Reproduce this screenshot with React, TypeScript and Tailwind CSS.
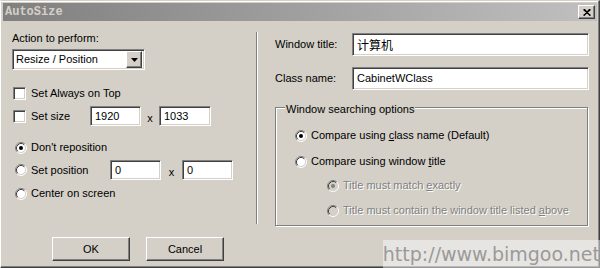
import React from "react";

const sunken =
  "bg-white border border-t-[#808080] border-l-[#808080] border-b-white border-r-white shadow-[inset_1px_1px_0_#404040,inset_-1px_-1px_0_#d4d0c8]";
const raised =
  "bg-[#d4d0c8] border border-t-white border-l-white border-b-[#404040] border-r-[#404040] shadow-[inset_-1px_-1px_0_#808080]";

function Radio({ checked, disabled }: { checked?: boolean; disabled?: boolean }) {
  return (
    <svg width="12" height="12" viewBox="0 0 12 12" className="shrink-0">
      <circle cx="6" cy="6" r="5" fill={disabled ? "#d4d0c8" : "#ffffff"} />
      <path d="M2.11 9.89 A5.5 5.5 0 0 1 9.89 2.11" fill="none" stroke="#808080" strokeWidth="1" />
      <path d="M2.82 9.18 A4.5 4.5 0 0 1 9.18 2.82" fill="none" stroke="#404040" strokeWidth="1" />
      <path d="M9.89 2.11 A5.5 5.5 0 0 1 2.11 9.89" fill="none" stroke="#ffffff" strokeWidth="1" />
      <path d="M9.18 2.82 A4.5 4.5 0 0 1 2.82 9.18" fill="none" stroke="#d4d0c8" strokeWidth="1" />
      {checked && <circle cx="6" cy="6" r="2" fill={disabled ? "#808080" : "#000000"} />}
    </svg>
  );
}

function Check() {
  return <div className={`w-[13px] h-[13px] shrink-0 ${sunken}`} />;
}

const disabledText = "text-[#808080] [text-shadow:1px_1px_0_#ffffff]";

export default function App() {
  return (
    <div className="relative w-[600px] h-[268px] overflow-hidden bg-[#d4d0c8] font-['Liberation_Sans',Arial,sans-serif] text-[11px] leading-[13px] text-black">
      <div className="flex flex-col h-full border border-t-[#d4d0c8] border-l-white border-b-[#404040] border-r-[#404040] shadow-[inset_-1px_-1px_0_#808080,inset_0_1px_0_#ffffff] pt-[2px] pl-[2px] pr-[2px]">
        {/* Title bar */}
        <div className="h-[18px] shrink-0 flex items-center justify-between bg-linear-to-r from-[#808080] to-[#c0c0c0] pl-[2px] pr-[2px]">
          <span className="font-['Liberation_Mono',monospace] font-bold text-[12px] text-[#d4d0c8] tracking-[0px]">AutoSize</span>
          <div className={`w-[17px] h-[14px] flex items-center justify-center ${raised}`}>
            <svg width="8" height="7" viewBox="0 0 8 7">
              <path d="M0.5 0.5 L7.5 6.5 M7.5 0.5 L0.5 6.5 M1.5 0.5 L7 6.5 M6.5 0.5 L1 6.5" stroke="#000" strokeWidth="1.3" fill="none" />
            </svg>
          </div>
        </div>

        {/* Body */}
        <div className="flex flex-1">
          {/* Left column */}
          <div className="w-[253px] shrink-0 pl-[9px] flex flex-col">
            <div className="mt-[11px] h-[13px]">Action to perform:</div>
            <div className={`mt-[4px] w-[133px] h-[21px] flex items-center ${sunken} pl-[3px] pr-[2px]`}>
              <span className="flex-1">Resize / Position</span>
              <div className={`w-[16px] h-[17px] flex items-center justify-center ${raised}`}>
                <svg width="7" height="4" viewBox="0 0 7 4">
                  <path d="M0 0 H7 L3.5 4 Z" fill="#000" />
                </svg>
              </div>
            </div>

            <div className="mt-[17px] h-[13px] flex items-center gap-[5px] pl-[1px]">
              <Check />
              <span>Set Always on Top</span>
            </div>

            <div className="mt-[6px] h-[20px] flex items-center">
              <div className="w-[78px] flex items-center gap-[5px] pl-[1px]">
                <Check />
                <span>Set size</span>
              </div>
              <div className={`w-[51px] h-[20px] flex items-center pl-[4px] ${sunken}`}>1920</div>
              <span className="w-[18px] text-center mt-[5px]">x</span>
              <div className={`w-[52px] h-[20px] flex items-center pl-[4px] ${sunken}`}>1033</div>
            </div>

            <div className="mt-[15px] h-[13px] flex items-center gap-[4px] pl-[3px]">
              <Radio checked />
              <span>Don't reposition</span>
            </div>

            <div className="mt-[6px] h-[20px] flex items-center">
              <div className="w-[98px] flex items-center gap-[4px] pl-[3px]">
                <Radio />
                <span>Set position</span>
              </div>
              <div className={`w-[51px] h-[20px] flex items-center pl-[4px] ${sunken}`}>0</div>
              <span className="w-[21px] text-center mt-[5px]">x</span>
              <div className={`w-[51px] h-[20px] flex items-center pl-[4px] ${sunken}`}>0</div>
            </div>

            <div className="mt-[7px] h-[13px] flex items-center gap-[4px] pl-[3px]">
              <Radio />
              <span>Center on screen</span>
            </div>

            <div className="mt-[37px] ml-[40px] flex gap-[16px]">
              <div className={`w-[78px] h-[24px] flex items-center justify-center ${raised}`}>OK</div>
              <div className={`w-[78px] h-[24px] flex items-center justify-center ${raised}`}>Cancel</div>
            </div>
          </div>

          {/* Separator */}
          <div className="mt-[11px] h-[192px] w-[2px] shrink-0 border-l border-l-[#808080] border-r border-r-white" />

          {/* Right column */}
          <div className="flex-1 pl-[17px] pr-[8px] flex flex-col">
            <div className="mt-[12px] h-[23px] flex items-center">
              <span className="w-[77px] shrink-0">Window title:</span>
              <div className={`flex-1 h-[23px] flex items-center pl-[4px] ${sunken} font-['Noto_Sans_CJK_SC',sans-serif] text-[12px]`}>计算机</div>
            </div>
            <div className="mt-[11px] h-[23px] flex items-center">
              <span className="w-[77px] shrink-0">Class name:</span>
              <div className={`flex-1 h-[23px] flex items-center pl-[4px] ${sunken}`}>CabinetWClass</div>
            </div>

            <div className="relative mt-[17px] mr-[1px] h-[119px] border border-[#808080] shadow-[1px_1px_0_#ffffff,inset_1px_1px_0_#ffffff] flex flex-col">
              <span className="absolute left-[9px] -top-[5px] px-[1px] bg-[#d4d0c8]">Window searching options</span>
              <div className="mt-[21px] pl-[19px] h-[13px] flex items-center gap-[4px]">
                <Radio checked />
                <span>
                  Compare using <span className="underline">c</span>lass name (Default)
                </span>
              </div>
              <div className="mt-[13px] pl-[19px] h-[13px] flex items-center gap-[4px]">
                <Radio />
                <span>
                  Compare using window <span className="underline">t</span>itle
                </span>
              </div>
              <div className="mt-[11px] pl-[51px] h-[13px] flex items-center gap-[4px]">
                <Radio checked disabled />
                <span className={disabledText}>
                  Title must match <span className="underline">e</span>xactly
                </span>
              </div>
              <div className="mt-[12px] pl-[51px] h-[13px] flex items-center gap-[4px]">
                <Radio disabled />
                <span className={disabledText}>
                  Title must contain the window title listed <span className="underline">a</span>bove
                </span>
              </div>
            </div>
          </div>
        </div>
      </div>

      {/* Watermark overlay */}
      <div className="absolute right-0 bottom-0 w-[217px] h-[28px] bg-white/45 flex items-center justify-end overflow-hidden">
        <span className="font-['DejaVu_Sans',sans-serif] text-[19px] leading-[28px] text-[#9a9a9a] whitespace-nowrap">http://www.bimgoo.net</span>
      </div>
    </div>
  );
}
